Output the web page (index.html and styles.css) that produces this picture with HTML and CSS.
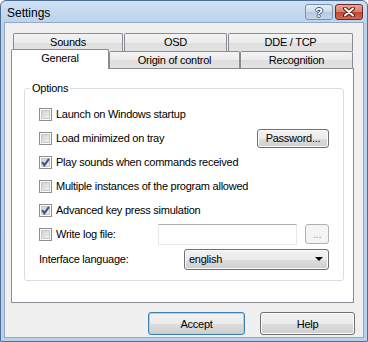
FILE: index.html
```html
<!DOCTYPE html>
<html lang="en">
  <head>
    <meta charset="utf-8" />
    <title>Settings</title>
    <link rel="stylesheet" href="styles.css">
  </head>
  <body>
    <div class="window">
      <div class="titlebar">
        <span class="title">Settings</span>
        <div class="caption-buttons">
          <span class="cap-btn cap-help">?</span>
          <span class="cap-btn cap-close">
            <svg width="14" height="10" viewBox="0 0 14 10">
              <path d="M3 1.5 L11 8.5 M11 1.5 L3 8.5" stroke="#5a1a14" stroke-width="4" stroke-linecap="round" />
              <path d="M3 1.5 L11 8.5 M11 1.5 L3 8.5" stroke="#ffffff" stroke-width="2" stroke-linecap="round" />
            </svg>
          </span>
        </div>
      </div>

      <div class="client">
        <div class="tab-row row-back">
          <div class="tab tab-sounds">Sounds</div>
          <div class="tab tab-osd">OSD</div>
          <div class="tab tab-dde">DDE / TCP</div>
        </div>
        <div class="tab-row row-front">
          <div class="tab tab-general active">General</div>
          <div class="tab tab-origin">Origin of control</div>
          <div class="tab tab-recog">Recognition</div>
        </div>

        <div class="panel">
          <fieldset class="group">
            <legend>Options</legend>
            <div class="options">
              <div class="row">
                <span class="checkbox"></span>
                <span class="label">Launch on Windows startup</span>
              </div>
              <div class="row">
                <span class="checkbox"></span>
                <span class="label">Load minimized on tray</span>
                <button class="btn btn-password">Password...</button>
              </div>
              <div class="row">
                <span class="checkbox checked">
                  <svg width="11" height="11" viewBox="0 0 11 11"><path d="M2.2 5.2 L4.4 8.2 L9 1.8" fill="none" stroke="#3d5289" stroke-width="2" /></svg>
                </span>
                <span class="label">Play sounds when commands received</span>
              </div>
              <div class="row">
                <span class="checkbox"></span>
                <span class="label">Multiple instances of the program allowed</span>
              </div>
              <div class="row">
                <span class="checkbox checked">
                  <svg width="11" height="11" viewBox="0 0 11 11"><path d="M2.2 5.2 L4.4 8.2 L9 1.8" fill="none" stroke="#3d5289" stroke-width="2" /></svg>
                </span>
                <span class="label">Advanced key press simulation</span>
              </div>
              <div class="row">
                <div class="log-label">
                  <span class="checkbox"></span>
                  <span class="label">Write log file:</span>
                </div>
                <span class="textbox"></span>
                <button class="btn btn-browse" disabled>...</button>
              </div>
              <div class="row row-lang">
                <span class="label">Interface language:</span>
                <div class="combo">
                  <span>english</span>
                  <span class="combo-arrow"></span>
                </div>
              </div>
            </div>
          </fieldset>
        </div>

        <div class="footer">
          <button class="btn btn-default btn-accept">Accept</button>
          <button class="btn btn-help">Help</button>
        </div>
      </div>
    </div>
  </body>
</html>
```

FILE: styles.css
```css
body {
  margin: 0;
  font-family: "Liberation Sans", Arial, sans-serif;
  font-size: 11px;
  letter-spacing: -0.25px;
  color: #000000;
}

.window {
  width: 368px;
  height: 342px;
  box-sizing: border-box;
  border: 1px solid #4f6f93;
  border-radius: 6px 6px 0 0;
  background: linear-gradient(#cfe0f4, #bcd2ed 22px, #b9d0eb);
  display: flex;
  flex-direction: column;
}

.titlebar {
  height: 21px;
  display: flex;
  justify-content: space-between;
  align-items: flex-start;
  padding: 0 4px 0 6px;
}

.title {
  font-size: 12px;
  letter-spacing: 0;
  line-height: 21px;
  padding-top: 2px;
  color: #000000;
}

.caption-buttons {
  display: flex;
  gap: 2px;
  margin-top: 3px;
}

.cap-btn {
  width: 28px;
  height: 16px;
  box-sizing: border-box;
  border-radius: 3px;
  display: flex;
  align-items: center;
  justify-content: center;
}

.cap-help {
  border: 1px solid #7d91ab;
  background: linear-gradient(#e6eef8, #cbd9ea 50%, #b6c9e1 51%, #c4d5ea);
  color: #ffffff;
  font-weight: bold;
  font-size: 13px;
  letter-spacing: 0;
  text-shadow: 1px 0 0 #49566a, -1px 0 0 #49566a, 0 1px 0 #49566a, 0 -1px 0 #49566a;
}

.cap-close {
  border: 1px solid #6b2a25;
  background: linear-gradient(#e9a797, #d77e6b 50%, #c2442f 51%, #cf6a52);
}

.client {
  flex: 1;
  margin: 0 3px 3px 3px;
  border: 1px solid #92a9c6;
  background: #f0f0f0;
  padding: 10px 9px 0 6px;
}

.tab-row {
  display: flex;
}

.row-back {
  height: 18px;
  margin-left: 2px;
  gap: 1px;
}

.row-front {
  height: 17px;
  align-items: flex-end;
}

.tab {
  box-sizing: border-box;
  border: 1px solid #898c95;
  border-bottom: none;
  border-radius: 2px 2px 0 0;
  background: linear-gradient(#f3f3f3, #ebebeb 50%, #dedede 51%, #e3e3e3);
  text-align: center;
  line-height: 16px;
}

.row-back .tab {
  height: 18px;
}

.row-front .tab {
  height: 17px;
}

.tab-sounds { width: 110px; }
.tab-osd { width: 103px; }
.tab-dde { width: 125px; }
.tab-origin { width: 131px; }
.tab-recog { width: 113px; }

.row-front .tab.active {
  width: 98px;
  height: 20px;
  margin-bottom: -1px;
  background: #ffffff;
  position: relative;
  z-index: 1;
  line-height: 17px;
}

.panel {
  height: 235px;
  box-sizing: border-box;
  border: 1px solid #898c95;
  background: #ffffff;
  padding: 13px 9px 0 12px;
}

.group {
  margin: 0;
  padding: 0;
  min-width: 0;
  height: 199px;
  box-sizing: border-box;
  border: 1px solid #d5dfe5;
  border-radius: 3px;
}

.group legend {
  margin-left: 5px;
  padding: 0 2px;
  line-height: 13px;
}

.options {
  padding: 7px 14px 0 14px;
}

.row {
  height: 24px;
  display: flex;
  align-items: center;
}

.checkbox {
  width: 13px;
  height: 13px;
  box-sizing: border-box;
  border: 1px solid #8e8f8f;
  background: linear-gradient(135deg, #cbcbcb, #f7f7f7);
  box-shadow: inset 0 0 0 1px #ffffff, inset 0 0 0 2px #c6c6c6;
  margin-right: 4px;
  flex-shrink: 0;
  display: flex;
}

.btn {
  font-family: "Liberation Sans", Arial, sans-serif;
  font-size: 11px;
  letter-spacing: -0.25px;
  color: #000000;
  box-sizing: border-box;
  border: 1px solid #707070;
  border-radius: 3px;
  background: linear-gradient(#f2f2f2, #ebebeb 50%, #dddddd 51%, #cfcfcf);
  box-shadow: inset 0 0 0 1px #fbfbfb;
  padding: 0;
}

.btn-password {
  margin-left: auto;
  width: 72px;
  height: 19px;
}

.log-label {
  width: 119px;
  display: flex;
  align-items: center;
}

.textbox {
  width: 139px;
  height: 21px;
  box-sizing: border-box;
  border: 1px solid #e3e9ef;
  border-top-color: #abadb3;
  background: #ffffff;
}

.btn-browse {
  width: 24px;
  height: 20px;
  margin-left: auto;
  border-color: #adb2b5;
  background: #f4f4f4;
  color: #a0a0a0;
  box-shadow: none;
  line-height: 12px;
}

.row-lang {
  height: 26px;
}

.combo {
  margin-left: auto;
  width: 145px;
  height: 21px;
  box-sizing: border-box;
  border: 1px solid #707070;
  border-radius: 3px;
  background: linear-gradient(#f2f2f2, #ebebeb 50%, #dddddd 51%, #cfcfcf);
  box-shadow: inset 0 0 0 1px #fbfbfb;
  display: flex;
  align-items: center;
  justify-content: space-between;
  padding: 0 5px 0 4px;
}

.combo-arrow {
  width: 0;
  height: 0;
  border-left: 4px solid transparent;
  border-right: 4px solid transparent;
  border-top: 4px solid #000000;
}

.footer {
  display: flex;
  justify-content: flex-end;
  gap: 15px;
  margin-top: 9px;
  margin-right: -1px;
}

.btn-accept {
  width: 97px;
  height: 23px;
}

.btn-help {
  width: 95px;
  height: 23px;
}

.btn-default {
  border-color: #3c7fb1;
  box-shadow: inset 0 0 0 1px #8fdaf6;
}
```
